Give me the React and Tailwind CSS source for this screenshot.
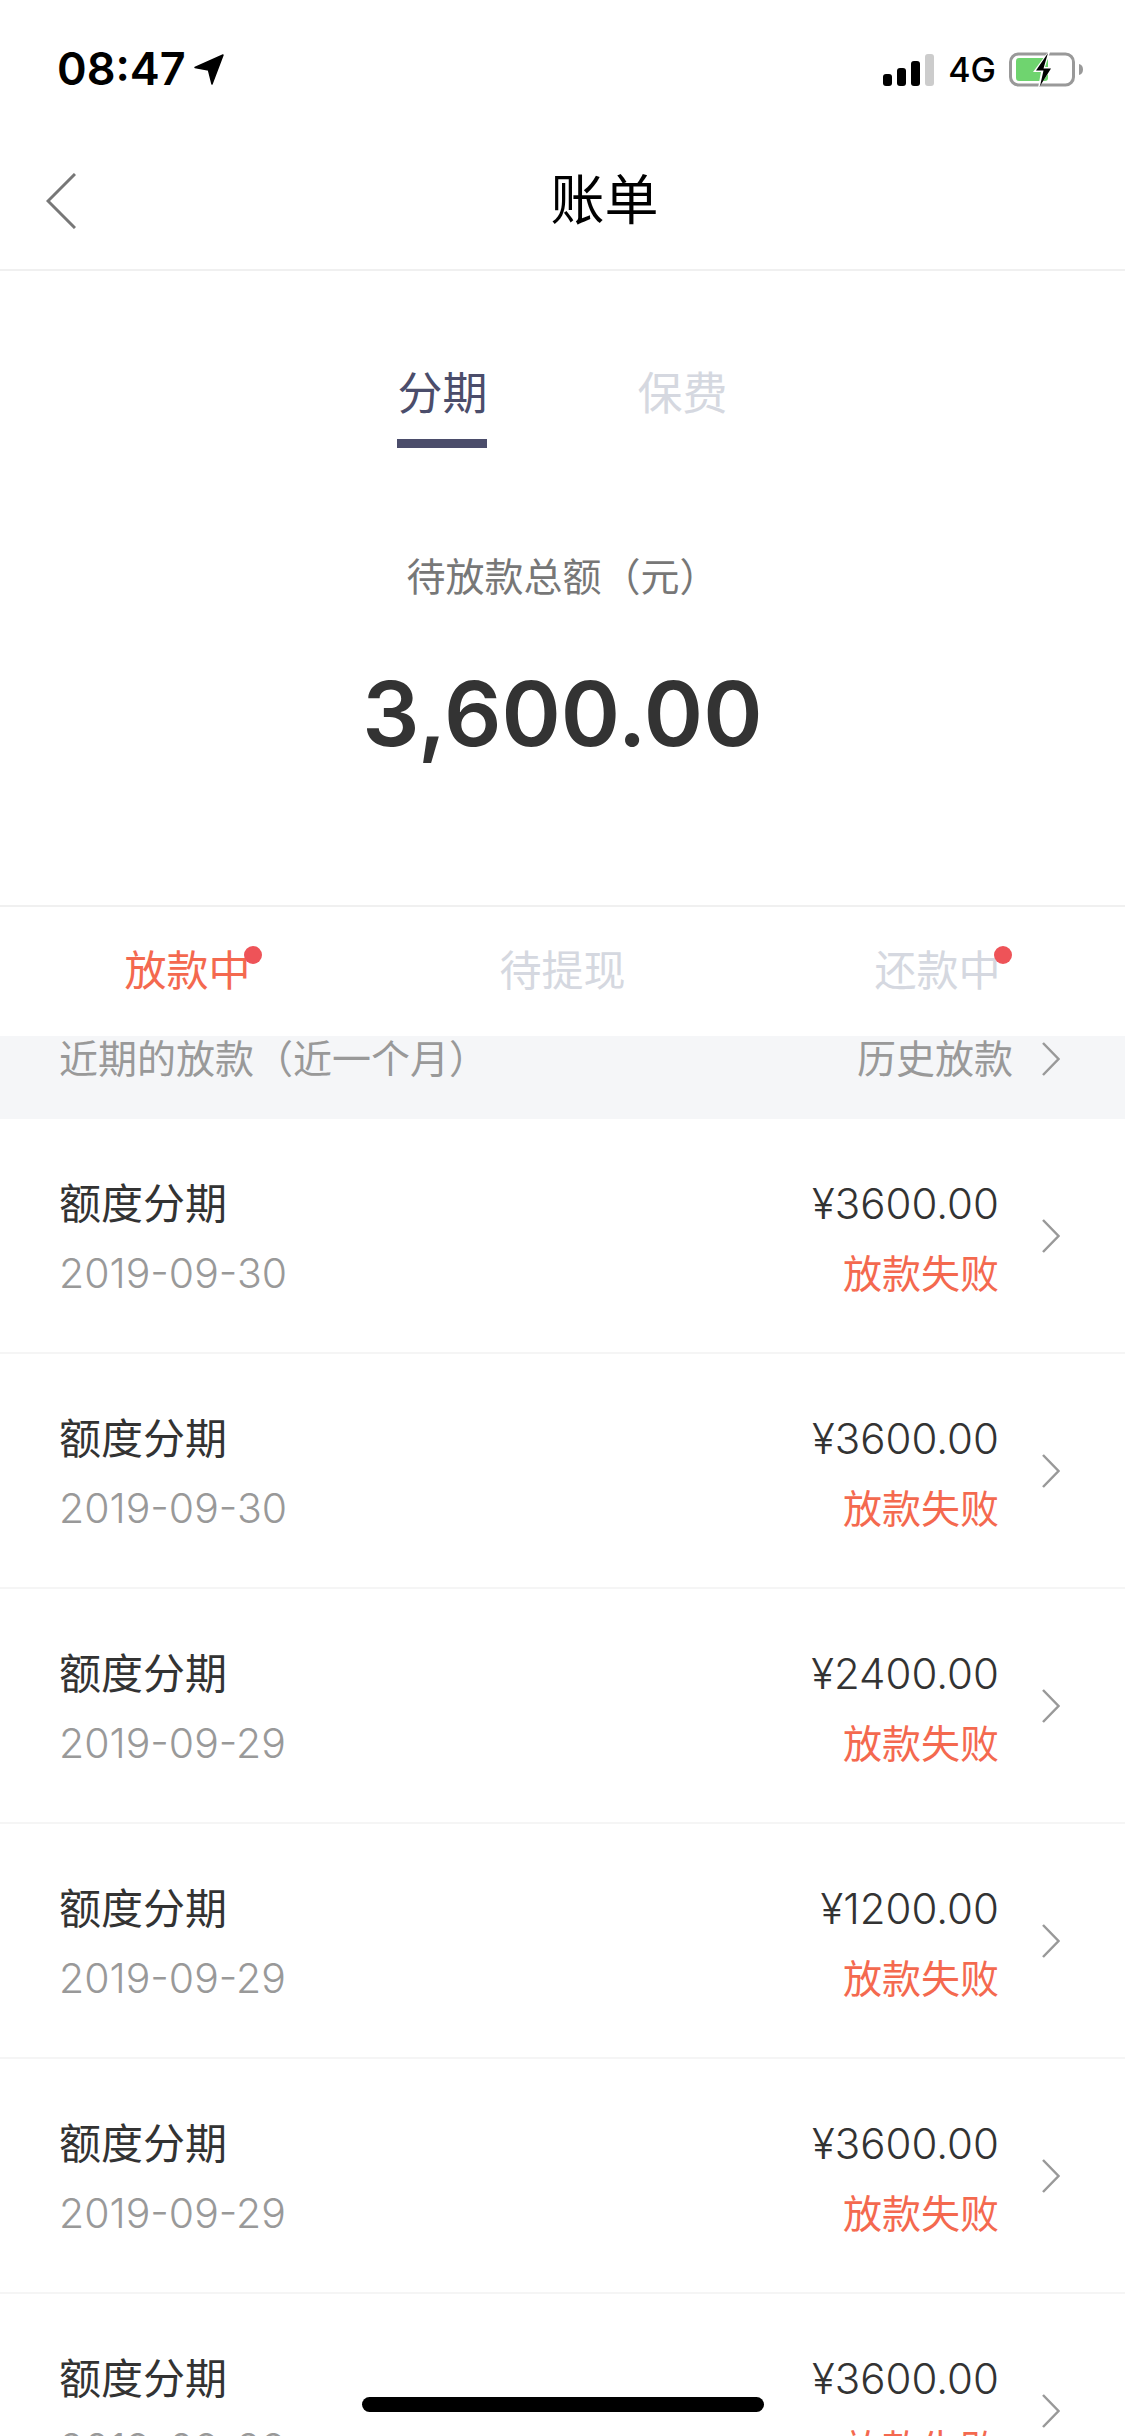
const bills = [
  { date: "2019-09-30", amount: "¥3600.00" },
  { date: "2019-09-30", amount: "¥3600.00" },
  { date: "2019-09-29", amount: "¥2400.00" },
  { date: "2019-09-29", amount: "¥1200.00" },
  { date: "2019-09-29", amount: "¥3600.00" },
  { date: "2019-09-29", amount: "¥3600.00" },
];

function Chevron() {
  return (
    <svg width="18" height="34" viewBox="0 0 18 34" fill="none" className="shrink-0">
      <path d="M1 1l15.500 16L1 33" stroke="#999" strokeWidth="2.500" />
    </svg>
  );
}

function StatusBar() {
  return (
    <div className="h-[132px] flex items-start justify-between pt-[48px] pl-[57px] pr-[41px]">
      <div className="flex items-center gap-[8px]">
        <span className="text-[45px] leading-[42px] font-semibold text-black">08:47</span>
        <svg width="30" height="31" viewBox="0 0 30 31">
          <path d="M29 1L18 30 14.500 16 1 13.500z" fill="#000" stroke="#000" strokeWidth="1.500" strokeLinejoin="round" />
        </svg>
      </div>
      <div className="flex items-center mt-[4px]">
        <svg width="51" height="32" viewBox="0 0 51 32">
          <rect x="0" y="20" width="9" height="12" rx="3" fill="#000" />
          <rect x="14" y="14" width="9" height="18" rx="3" fill="#000" />
          <rect x="28" y="7" width="9" height="25" rx="3" fill="#000" />
          <rect x="42" y="0" width="9" height="32" rx="3" fill="#ccc" />
        </svg>
        <span className="ml-[14px] text-[34px] leading-[34px] font-medium text-black">4G</span>
        <svg width="75" height="36" viewBox="0 0 75 36" className="ml-[13px]">
          <rect x="1.500" y="2" width="63" height="31" rx="8" fill="none" stroke="#999" strokeWidth="3" />
          <rect x="7" y="6" width="32" height="23" rx="3" fill="#6fd46f" />
          <path d="M70 12c3 .5 4 3 4 5.500s-1 5-4 5.500z" fill="#999" />
          <path d="M39 0L24 20h8l-3 16 15-21h-8l5-15z" fill="#fff" />
          <path d="M39 1L27 18.500h7.500L31 34 42 16.500h-7.500L39 1z" fill="#000" />
        </svg>
      </div>
    </div>
  );
}

function BillRow({ bill }) {
  return (
    <div className="h-[235px] flex items-center pl-[59px] pr-[65px] border-b-2 border-[#f5f5f5] bg-white">
      <div className="flex-1 flex flex-col gap-[25px] mt-[6px]">
        <span className="text-[42px] leading-[45px] font-normal text-[#333]">额度分期</span>
        <span className="text-[41px] leading-[45px] font-light text-[#999]">{bill.date}</span>
      </div>
      <div className="flex flex-col items-end gap-[25px] mr-[43px] mt-[6px]">
        <span className="text-[42px] leading-[45px] font-light text-[#333]">{bill.amount}</span>
        <span className="text-[39px] leading-[45px] font-normal text-[#f4694f]">放款失败</span>
      </div>
      <Chevron />
    </div>
  );
}

export default function App() {
  return (
    <div className="relative h-[2436px] w-[1125px] overflow-hidden bg-white font-['Inter','Noto_Sans_CJK_SC',sans-serif]">
      <StatusBar />

      <div className="h-[139px] relative flex items-center justify-center pl-[84px] border-b-2 border-[#f0f0f0]">
        <svg width="30" height="56" viewBox="0 0 30 56" className="absolute left-[46px] top-[41px]">
          <path d="M29 1L2 28l27 27" fill="none" stroke="#777" strokeWidth="3" />
        </svg>
        <span className="text-[54px] leading-[60px] text-black">账单</span>
      </div>

      <div className="h-[634px] flex flex-col items-center">
        <div className="flex gap-[150px] pt-[93px]">
          <div className="flex flex-col items-center">
            <span className="text-[45px] leading-[60px] font-normal text-[#4b4d6b]">分期</span>
            <div className="mt-[15px] h-[9px] w-[90px] bg-[#4b4d6b]" />
          </div>
          <span className="text-[45px] leading-[60px] font-normal text-[#d5d8e0]">保费</span>
        </div>
        <span className="mt-[104px] text-[39px] leading-[50px] font-normal text-[#777]">待放款总额（元）</span>
        <span className="mt-[57px] text-[90px] leading-[110px] font-semibold text-[#333]">3,600.00</span>
      </div>

      <div className="h-[131px] grid grid-cols-3 border-t-2 border-[#f0f0f0]">
        <div className="flex items-center justify-center pb-[2px]">
          <span className="relative text-[42px] leading-[50px] font-normal text-[#f4694f]">
            放款中
            <i className="absolute -right-[11px] top-[0px] h-[18px] w-[18px] rounded-full bg-[#ee5358]" />
          </span>
        </div>
        <div className="flex items-center justify-center pb-[2px]">
          <span className="text-[42px] leading-[50px] font-normal text-[#d5d8e0]">待提现</span>
        </div>
        <div className="flex items-center justify-center pb-[2px]">
          <span className="relative text-[42px] leading-[50px] font-normal text-[#d5d8e0]">
            还款中
            <i className="absolute -right-[11px] top-[0px] h-[18px] w-[18px] rounded-full bg-[#ee5358]" />
          </span>
        </div>
      </div>

      <div className="h-[83px] flex items-start justify-between bg-[#f5f6f8] pl-[59px] pr-[65px]">
        <span className="text-[39px] leading-[46px] font-normal text-[#999]">近期的放款（近一个月）</span>
        <div className="flex items-center gap-[29px]">
          <span className="text-[39px] leading-[46px] font-normal text-[#999]">历史放款</span>
          <Chevron />
        </div>
      </div>

      {bills.map((bill, i) => (
        <BillRow key={i} bill={bill} />
      ))}

      <div className="absolute left-[362px] top-[2397px] h-[15px] w-[402px] rounded-[8px] bg-black" />
    </div>
  );
}
